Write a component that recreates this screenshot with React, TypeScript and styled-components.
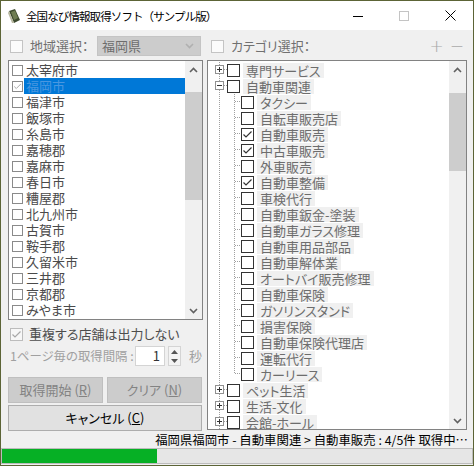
import React from 'react';
import styled, { createGlobalStyle } from 'styled-components';

const FONT = `"Noto Sans CJK JP", "Noto Sans", "Liberation Sans", sans-serif`;

const GlobalStyle = createGlobalStyle`
  html, body { margin: 0; padding: 0; background: #f0f0f0; }
  body { font-family: ${FONT}; font-size: 13px; font-feature-settings: "palt"; }
  * { box-sizing: border-box; }
`;

const Window = styled.div`
  width: 474px;
  height: 466px;
  border: 1px solid #5c6436;
  background: #f0f0f0;
  display: flex;
  flex-direction: column;
  overflow: hidden;
`;

const TitleBar = styled.div`
  height: 29px;
  background: #ffffff;
  display: flex;
  align-items: center;
  flex-shrink: 0;
`;

const TitleText = styled.span`
  margin-left: 4px;
  font-size: 11.5px;
  letter-spacing: -0.9px;
  font-feature-settings: normal;
  color: #000;
  flex: 1;
`;

const CaptionButton = styled.div`
  width: 46px;
  height: 29px;
  display: flex;
  align-items: center;
  justify-content: center;
`;

const Body = styled.div`
  display: grid;
  grid-template-columns: 195px 260px;
  column-gap: 4px;
  padding: 6px 6px 0 7px;
  height: 402px;
`;

const Column = styled.div`
  display: flex;
  flex-direction: column;
`;

const Header = styled.div<{ $indent: number }>`
  height: 20px;
  display: flex;
  align-items: center;
  margin-bottom: 4px;
  padding-left: ${({ $indent }) => $indent}px;
`;

const Check = styled.span<{ $size?: number; $border?: string; $bg?: string; $gap?: number }>`
  width: ${({ $size }) => $size ?? 13}px;
  height: ${({ $size }) => $size ?? 13}px;
  margin-left: ${({ $gap }) => $gap ?? 0}px;
  border: 1px solid ${({ $border }) => $border ?? '#333333'};
  background: ${({ $bg }) => $bg ?? '#ffffff'};
  display: flex;
  align-items: center;
  justify-content: center;
  flex-shrink: 0;
`;

const HeaderLabel = styled.span`
  color: #707070;
  margin-left: 7px;
  line-height: 16px;
`;

const Combo = styled.div`
  width: 104px;
  height: 20px;
  margin-left: auto;
  margin-right: 2px;
  background: #cccccc;
  border: 1px solid #c4c4c4;
  display: flex;
  align-items: center;
  justify-content: space-between;
  padding: 0 6px 0 4px;
  color: #6d6d6d;
  line-height: 16px;
`;

const PlusMinus = styled.span`
  margin-left: auto;
  margin-right: 3px;
  color: #a8a8a8;
  font-size: 17px;
  line-height: 20px;
  display: flex;
  gap: 6px;
  font-family: "DejaVu Sans", sans-serif;
  font-weight: 200;
`;

const ListBox = styled.div<{ $height: number }>`
  height: ${({ $height }) => $height}px;
  border: 1px solid #828282;
  background: #ffffff;
  display: flex;
  overflow: hidden;
`;

const Items = styled.div<{ $indent?: number }>`
  flex: 1;
  padding-top: 1px;
  padding-left: ${({ $indent }) => $indent ?? 0}px;
  overflow: hidden;
`;

const ListRow = styled.div`
  height: 16px;
  display: flex;
  align-items: center;
`;

const ListLabel = styled.span<{ $selected?: boolean }>`
  flex: 1;
  height: 16px;
  line-height: 16px;
  margin-left: 1px;
  padding-left: 2px;
  white-space: nowrap;
  color: ${({ $selected }) => ($selected ? '#4a97e0' : '#4a4a4a')};
  background: ${({ $selected }) => ($selected ? '#0078d7' : 'transparent')};
`;

const ScrollBar = styled.div`
  width: 17px;
  background: #f0f0f0;
  display: flex;
  flex-direction: column;
  flex-shrink: 0;
`;

const ScrollArrow = styled.div`
  height: 17px;
  display: flex;
  align-items: center;
  justify-content: center;
  flex-shrink: 0;
`;

const Track = styled.div`
  flex: 1;
`;

const Thumb = styled.div<{ $top: number; $height: number }>`
  margin: ${({ $top }) => $top}px 0 0 0;
  height: ${({ $height }) => $height}px;
  background: #cdcdcd;
`;

const TreeRow = styled.div`
  height: 16px;
  display: flex;
  align-items: center;
  white-space: nowrap;
`;

const TreeLabel = styled.span`
  height: 15px;
  line-height: 15px;
  margin-left: 3px;
  padding: 0 3px;
  background: #f0f0f0;
  color: #6d6d6d;
`;

const OptionRow = styled.div<{ $top: number; $height: number }>`
  margin-top: ${({ $top }) => $top}px;
  height: ${({ $height }) => $height}px;
  display: flex;
  align-items: center;
  padding-left: 2px;
`;

const OptionText = styled.span<{ $color: string; $gap?: number; $width?: number; $size?: number }>`
  color: ${({ $color }) => $color};
  margin-left: ${({ $gap }) => $gap ?? 0}px;
  width: ${({ $width }) => ($width ? `${$width}px` : 'auto')};
  font-size: ${({ $size }) => $size ?? 13}px;
  line-height: 16px;
  white-space: nowrap;
  flex-shrink: 0;
`;

const SpinInput = styled.div`
  width: 30px;
  height: 20px;
  background: #ffffff;
  border: 1px solid #d4d4d4;
  color: #333;
  text-align: right;
  padding-right: 4px;
  line-height: 18px;
`;

const Spin = styled.div`
  width: 13px;
  height: 20px;
  margin-left: 3px;
  display: flex;
  flex-direction: column;
  border: 1px solid #d4d4d4;
  background: #f4f4f4;
`;

const SpinHalf = styled.div`
  flex: 1;
  display: flex;
  align-items: center;
  justify-content: center;
`;

const ButtonGrid = styled.div`
  width: 194px;
  margin-top: 11px;
  display: grid;
  grid-template-columns: 95px 95px;
  gap: 2px 4px;
`;

const Button = styled.div<{ $disabled?: boolean; $wide?: boolean }>`
  height: 26px;
  grid-column: ${({ $wide }) => ($wide ? '1 / span 2' : 'auto')};
  background: ${({ $disabled }) => ($disabled ? '#cccccc' : '#e1e1e1')};
  border: 1px solid ${({ $disabled }) => ($disabled ? '#bfbfbf' : '#adadad')};
  color: ${({ $disabled }) => ($disabled ? '#838383' : '#000000')};
  display: flex;
  align-items: center;
  justify-content: center;
  line-height: 16px;
`;

const StatusLine = styled.div`
  height: 16px;
  line-height: 16px;
  font-size: 12.4px;
  text-align: right;
  padding-right: 5px;
  color: #000;
  white-space: nowrap;
`;

const Progress = styled.div`
  height: 16px;
  background: #e6e6e6;
  border: 1px solid #bcbcbc;
  display: flex;
`;

const ProgressFill = styled.div<{ $pct: number }>`
  width: ${({ $pct }) => $pct}%;
  background: #06b025;
`;

const CheckMark = ({ color = '#333333' }: { color?: string }) => (
  <svg width="11" height="11" viewBox="0 0 11 11">
    <polyline points="1.5,5.5 4,8 9.5,2.5" fill="none" stroke={color} strokeWidth="1.2" />
  </svg>
);

const Chevron = ({ up, color = '#606060' }: { up?: boolean; color?: string }) => (
  <svg width="9" height="6" viewBox="0 0 9 6">
    <polyline
      points={up ? '1,5 4.5,1.5 8,5' : '1,1 4.5,4.5 8,1'}
      fill="none"
      stroke={color}
      strokeWidth="1.6"
    />
  </svg>
);

const Bar = ({ top, height }: { top: number; height: number }) => (
  <ScrollBar>
    <ScrollArrow>
      <Chevron up />
    </ScrollArrow>
    <Track>
      <Thumb $top={top} $height={height} />
    </Track>
    <ScrollArrow>
      <Chevron />
    </ScrollArrow>
  </ScrollBar>
);

const DOT = '#a0a0a0';

const RootGutter = ({ expander }: { expander?: '+' | '-' }) => (
  <svg width="16" height="16" viewBox="0 0 16 16" shapeRendering="crispEdges">
    <line x1="8.5" y1="0" x2="8.5" y2="16" stroke={DOT} strokeDasharray="1 1" />
    {expander && (
      <>
        <line x1="13" y1="7.5" x2="16" y2="7.5" stroke={DOT} strokeDasharray="1 1" />
        <rect x="4.5" y="3.5" width="8" height="8" fill="#fff" stroke="#919191" />
        <line x1="6" y1="7.5" x2="11" y2="7.5" stroke="#333" />
        {expander === '+' && <line x1="8.5" y1="5" x2="8.5" y2="10" stroke="#333" />}
      </>
    )}
  </svg>
);

const ChildGutter = ({ last }: { last?: boolean }) => (
  <svg width="14" height="16" viewBox="0 0 14 16" shapeRendering="crispEdges">
    <line x1="7.5" y1="0" x2="7.5" y2={last ? 8 : 16} stroke={DOT} strokeDasharray="1 1" />
    <line x1="8" y1="7.5" x2="14" y2="7.5" stroke={DOT} strokeDasharray="1 1" />
  </svg>
);

const cities = [
  '太宰府市', '福岡市', '福津市', '飯塚市', '糸島市', '嘉穂郡', '嘉麻市', '春日市',
  '糟屋郡', '北九州市', '古賀市', '鞍手郡', '久留米市', '三井郡', '京都郡', 'みやま市',
];

const children: [string, boolean][] = [
  ['タクシー', false], ['自転車販売店', false], ['自動車販売', true], ['中古車販売', true],
  ['外車販売', false], ['自動車整備', true], ['車検代行', false], ['自動車鈑金-塗装', false],
  ['自動車ガラス修理', false], ['自動車用品部品', false], ['自動車解体業', false],
  ['オートバイ販売修理', false], ['自動車保険', false], ['ガソリンスタンド', false],
  ['損害保険', false], ['自動車保険代理店', false], ['運転代行', false], ['カーリース', false],
];

const Tree = () => (
  <Items $indent={3}>
    <TreeRow>
      <RootGutter expander="+" />
      <Check />
      <TreeLabel>専門サービス</TreeLabel>
    </TreeRow>
    <TreeRow>
      <RootGutter expander="-" />
      <Check />
      <TreeLabel>自動車関連</TreeLabel>
    </TreeRow>
    {children.map(([name, checked], i) => (
      <TreeRow key={name}>
        <RootGutter />
        <ChildGutter last={i === children.length - 1} />
        <Check>{checked && <CheckMark />}</Check>
        <TreeLabel>{name}</TreeLabel>
      </TreeRow>
    ))}
    {['ペット生活', '生活-文化', '会館-ホール'].map((name) => (
      <TreeRow key={name}>
        <RootGutter expander="+" />
        <Check />
        <TreeLabel>{name}</TreeLabel>
      </TreeRow>
    ))}
  </Items>
);

export default function App() {
  return (
    <>
      <GlobalStyle />
      <Window>
        <TitleBar>
          <svg width="16" height="16" viewBox="0 0 16 16" style={{ marginLeft: 5 }}>
            <polygon points="3,3 9,1 14,12 8,15" fill="#3d4a2e" />
            <polygon points="3,3 8,15 6,15 2,5" fill="#b8b8a0" />
            <polygon points="5,4 9,2.5 12,10 8,12" fill="#6f7d52" />
          </svg>
          <TitleText>全国なび情報取得ソフト（サンプル版）</TitleText>
          <CaptionButton>
            <svg width="10" height="10" viewBox="0 0 10 10" shapeRendering="crispEdges">
              <line x1="0" y1="5.5" x2="10" y2="5.5" stroke="#000" />
            </svg>
          </CaptionButton>
          <CaptionButton>
            <svg width="10" height="10" viewBox="0 0 10 10" shapeRendering="crispEdges">
              <rect x="0.5" y="0.5" width="9" height="9" fill="none" stroke="#c4c4c4" />
            </svg>
          </CaptionButton>
          <CaptionButton>
            <svg width="11" height="11" viewBox="0 0 11 11">
              <line x1="0.5" y1="0.5" x2="10.5" y2="10.5" stroke="#000" />
              <line x1="10.5" y1="0.5" x2="0.5" y2="10.5" stroke="#000" />
            </svg>
          </CaptionButton>
        </TitleBar>

        <Body>
          <Column>
            <Header $indent={2}>
              <Check $border="#c4c4c4" $bg="#fbfbfb" />
              <HeaderLabel>地域選択：</HeaderLabel>
              <Combo>
                <span>福岡県</span>
                <Chevron color="#b0b0b0" />
              </Combo>
            </Header>
            <ListBox $height={260}>
              <Items>
                {cities.map((c, i) => (
                  <ListRow key={c}>
                    <Check $size={11} $border="#8a8a8a" $gap={3}>
                      {i === 1 && <CheckMark color="#a8a8a8" />}
                    </Check>
                    <ListLabel $selected={i === 1}>{c}</ListLabel>
                  </ListRow>
                ))}
              </Items>
              <Bar top={14} height={108} />
            </ListBox>
            <OptionRow $top={6} $height={16}>
              <Check $border="#bcbcbc" $bg="#f7f7f7">
                <CheckMark color="#a8a8a8" />
              </Check>
              <OptionText $color="#4d4d4d" $gap={6}>
                重複する店舗は出力しない
              </OptionText>
            </OptionRow>
            <OptionRow $top={4} $height={20}>
              <OptionText $color="#a0a0a0" $width={125} $size={12.4}>
                1ページ毎の取得間隔 :
              </OptionText>
              <SpinInput>1</SpinInput>
              <Spin>
                <SpinHalf>
                  <svg width="7" height="4" viewBox="0 0 7 4">
                    <polygon points="0,4 3.5,0 7,4" fill="#555" />
                  </svg>
                </SpinHalf>
                <SpinHalf>
                  <svg width="7" height="4" viewBox="0 0 7 4">
                    <polygon points="0,0 3.5,4 7,0" fill="#555" />
                  </svg>
                </SpinHalf>
              </Spin>
              <OptionText $color="#a0a0a0" $gap={8}>
                秒
              </OptionText>
            </OptionRow>
            <ButtonGrid>
              <Button $disabled>
                取得開始 (<u>R</u>)
              </Button>
              <Button $disabled>
                クリア (<u>N</u>)
              </Button>
              <Button $wide>
                キャンセル (<u>C</u>)
              </Button>
            </ButtonGrid>
          </Column>

          <Column>
            <Header $indent={4}>
              <Check $border="#c4c4c4" $bg="#fbfbfb" />
              <HeaderLabel>カテゴリ選択：</HeaderLabel>
              <PlusMinus>
                <span>+</span>
                <span>−</span>
              </PlusMinus>
            </Header>
            <ListBox $height={370}>
              <Tree />
              <Bar top={15} height={78} />
            </ListBox>
          </Column>
        </Body>

        <StatusLine>福岡県福岡市 - 自動車関連 &gt; 自動車販売 : 4/5件 取得中…</StatusLine>
        <Progress>
          <ProgressFill $pct={33} />
        </Progress>
      </Window>
    </>
  );
}
